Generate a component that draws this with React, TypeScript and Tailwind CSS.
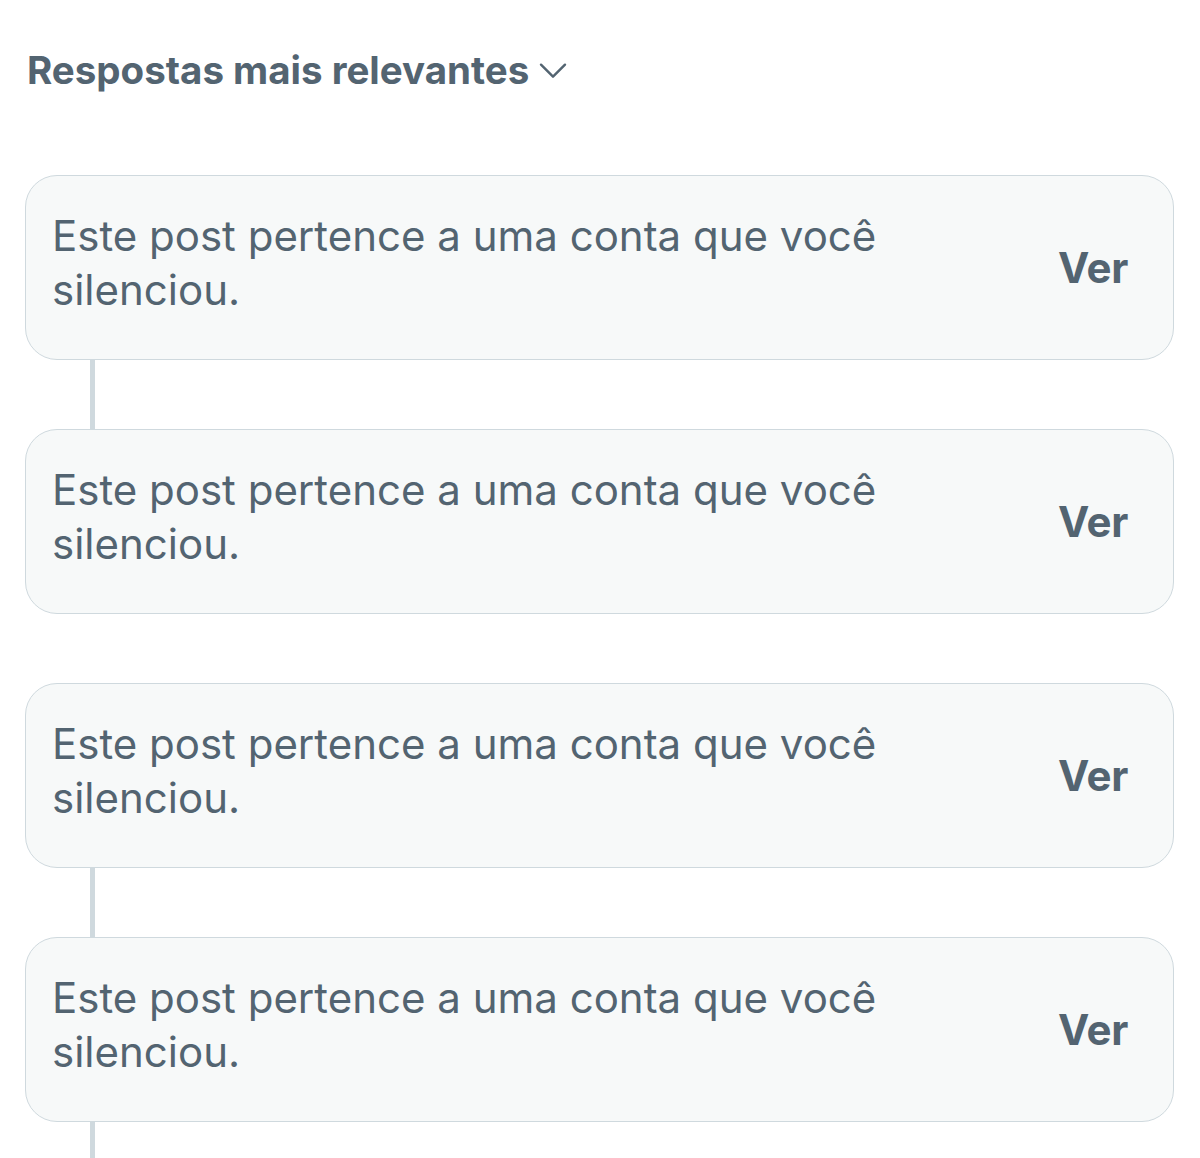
import React from "react";

function Card() {
  return (
    <div className="flex items-center justify-between rounded-[32px] border border-[#cfd9de] bg-[#f7f9f9] pl-[26px] pr-[45px] h-[185px]">
      <p className="w-[860px] pb-[10px] text-[42px] leading-[54px] text-[#536471]">
        Este post pertence a uma conta que você silenciou.
      </p>
      <span className="text-[42px] font-bold text-[#536471] tracking-[-0.3px]">Ver</span>
    </div>
  );
}

function Gap({ line }: { line: boolean }) {
  return (
    <div className="h-[69px] relative">
      {line && <div className="ml-[65px] w-[5px] h-full bg-[#cfd9de]" />}
    </div>
  );
}

export default function App() {
  return (
    <div className="w-[1200px] h-[1158px] overflow-hidden bg-white" style={{ fontFamily: "Inter, 'Noto Sans', sans-serif" }}>
      <div className="pt-[46px] pl-[27px] flex items-center gap-[8px]">
        <span className="text-[38.5px] leading-[48px] font-bold text-[#536471]">Respostas mais relevantes</span>
        <svg width="32" height="32" viewBox="0 0 24 24" fill="none" stroke="#536471" strokeWidth="1.8" strokeLinecap="round" strokeLinejoin="round">
          <path d="M3 8l9 9 9-9" />
        </svg>
      </div>
      <div className="mt-[81px] pl-[25px] pr-[26px]">
        <Card />
        <Gap line />
        <Card />
        <Gap line={false} />
        <Card />
        <Gap line />
        <Card />
        <Gap line />
      </div>
    </div>
  );
}
